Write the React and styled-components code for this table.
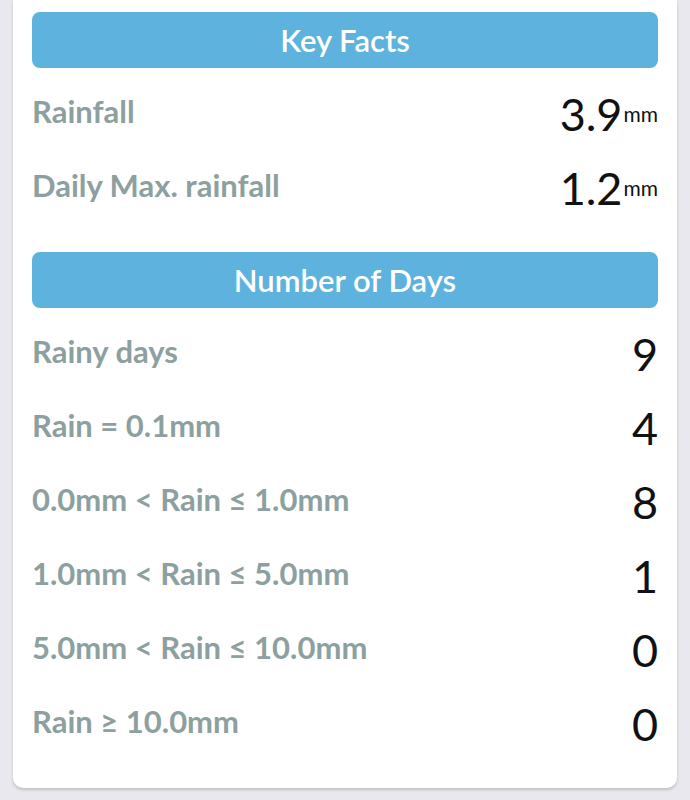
import styled, { createGlobalStyle } from 'styled-components';

const GlobalStyle = createGlobalStyle`
  html, body {
    margin: 0;
    padding: 0;
    background: #e9e8ee;
  }
  body {
    font-family: Lato, "Open Sans", sans-serif;
  }
`;

const Page = styled.div`
  padding: 0 13px 14px;
`;

const Card = styled.div`
  background: #ffffff;
  border-radius: 0 0 10px 10px;
  box-shadow: 0 2px 3px rgba(0, 0, 0, 0.18);
  padding: 12px 19px 30px;
`;

const Section = styled.section`
  & + & {
    margin-top: 30px;
  }
`;

const Header = styled.div`
  height: 56px;
  border-radius: 8px;
  background: #5db2de;
  color: #ffffff;
  font-size: 31px;
  font-weight: 600;
  display: flex;
  align-items: center;
  justify-content: center;
  margin-bottom: 6px;
`;

const Row = styled.div`
  height: 74px;
  display: flex;
  align-items: center;
  justify-content: space-between;
`;

const Label = styled.span`
  color: #8ca0a0;
  font-size: 31px;
  font-weight: 700;
`;

const Value = styled.span`
  display: flex;
  align-items: center;
  color: #111111;
  font-size: 45px;
  font-weight: 400;
  line-height: 1;
  padding-top: 6px;
`;

const Unit = styled.span`
  font-size: 21px;
  margin-left: 1px;
  padding-bottom: 2px;
`;

const keyFacts = [
  { label: 'Rainfall', value: '3.9', unit: 'mm' },
  { label: 'Daily Max. rainfall', value: '1.2', unit: 'mm' },
];

const days = [
  { label: 'Rainy days', value: '9' },
  { label: 'Rain = 0.1mm', value: '4' },
  { label: '0.0mm < Rain ≤ 1.0mm', value: '8' },
  { label: '1.0mm < Rain ≤ 5.0mm', value: '1' },
  { label: '5.0mm < Rain ≤ 10.0mm', value: '0' },
  { label: 'Rain ≥ 10.0mm', value: '0' },
];

function StatSection({ title, rows }) {
  return (
    <Section>
      <Header>{title}</Header>
      {rows.map((r) => (
        <Row key={r.label}>
          <Label>{r.label}</Label>
          <Value>
            {r.value}
            {r.unit && <Unit>{r.unit}</Unit>}
          </Value>
        </Row>
      ))}
    </Section>
  );
}

export default function App() {
  return (
    <>
      <GlobalStyle />
      <Page>
        <Card>
          <StatSection title="Key Facts" rows={keyFacts} />
          <StatSection title="Number of Days" rows={days} />
        </Card>
      </Page>
    </>
  );
}
